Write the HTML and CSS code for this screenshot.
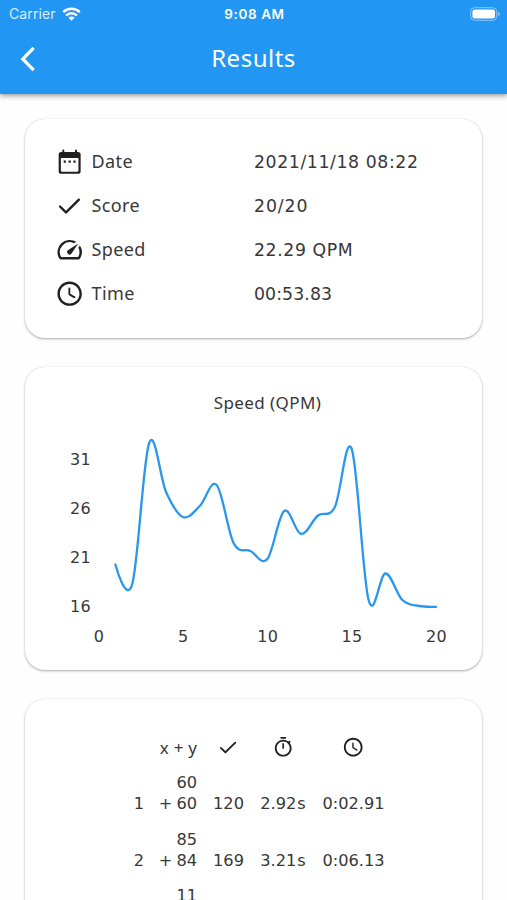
FILE: index.html
```html
<!DOCTYPE html>
<html lang="en">
<head>
<meta charset="utf-8">
<title>Results</title>
<link rel="stylesheet" href="styles.css">
</head>
<body>
<svg class="defs" width="0" height="0">
  <symbol id="check" viewBox="0 0 24 24"><path d="M9 16.2 4.8 12a1 1 0 0 0-1.4 1.4l4.9 4.9a1 1 0 0 0 1.4 0L20.3 7.7a1 1 0 0 0-1.4-1.4z"/></symbol>
  <symbol id="clock" viewBox="0 0 24 24"><path d="M11.99 2C6.47 2 2 6.48 2 12s4.47 10 9.99 10C17.52 22 22 17.52 22 12S17.52 2 11.99 2zM12 20c-4.42 0-8-3.58-8-8s3.58-8 8-8 8 3.58 8 8-3.58 8-8 8zm-.2-13a.8.8 0 0 0-.8.8v4.6c0 .35.2.65.5.83l4.1 2.47a.77.77 0 0 0 .8-1.3l-3.9-2.3V7.8a.75.75 0 0 0-.7-.8z"/></symbol>
</svg>
<header class="app-bar">
  <div class="status">
    <div class="status-left">
      <span>Carrier</span>
      <svg class="wifi" viewBox="0 0 19 14"><g fill="none" stroke="#fff" stroke-width="2.5"><path d="M1.2 5.1a12 12 0 0 1 16.6 0"/><path d="M4.1 8.5a7.5 7.5 0 0 1 10.8 0"/></g><path fill="#fff" d="M9.5 13.8 6.4 10.8a4.3 4.3 0 0 1 6.2 0z"/></svg>
    </div>
    <div class="clock">9:08 AM</div>
    <svg class="battery" viewBox="0 0 30 14"><rect x=".7" y=".7" width="26" height="12.6" rx="3.8" fill="none" stroke="#8bc7fa"/><rect x="2.4" y="2.4" width="22.6" height="9.2" rx="2.3" fill="#fff"/><path d="M28 4.7q1.8.7 1.8 2.3T28 9.3z" fill="#8bc7fa"/></svg>
  </div>
  <div class="nav">
    <svg class="back" viewBox="0 0 16 26"><path d="M13.7 1.9 2.7 13l11 11.1" fill="none" stroke="#fff" stroke-width="3.2"/></svg>
    <h1>Results</h1>
  </div>
</header>
<main>
  <section class="card summary">
    <div class="row">
      <svg class="icon" viewBox="0 0 24 24"><path d="M8 11.1h-.9v1.8h1.8v-1.8zm4 0h-.9v1.8h1.8v-1.8zm4 0h-.9v1.8h1.8v-1.8zM19 4h-1V2.8a.8.8 0 0 0-1.6 0V4H7.6V2.8a.8.8 0 0 0-1.6 0V4H5c-1.1 0-2 .9-2 2v14c0 1.1.9 2 2 2h14c1.1 0 2-.9 2-2V6c0-1.1-.9-2-2-2zm.2 15.3c0 .6-.3.9-.9.9H5.7c-.6 0-.9-.3-.9-.9V9h14.4z"/></svg>
      <span class="label">Date</span><span class="value">2021/11/18 08:22</span>
    </div>
    <div class="row"><svg class="icon"><use href="#check"/></svg><span class="label">Score</span><span class="value score">20/20</span></div>
    <div class="row">
      <svg class="icon" viewBox="0 0 24 24"><path d="M20.38 8.57l-1.23 1.85a8 8 0 0 1-.22 7.58H5.07A8 8 0 0 1 15.58 6.85l1.85-1.23A10 10 0 0 0 3.35 19a2 2 0 0 0 1.72 1h13.85a2 2 0 0 0 1.74-1 10 10 0 0 0-.27-10.44zm-9.79 6.84a2 2 0 0 0 2.83 0l5.66-8.49-8.49 5.66a2 2 0 0 0 0 2.83z"/></svg>
      <span class="label">Speed</span><span class="value">22.29 QPM</span>
    </div>
    <div class="row"><svg class="icon"><use href="#clock"/></svg><span class="label">Time</span><span class="value time">00:53.83</span></div>
  </section>
  <section class="card chart">
    <h2>Speed (QPM)</h2>
    <svg class="plot" viewBox="0 0 457 240" width="457" height="240">
      <g class="axis" text-anchor="middle">
        <text x="55.5" y="38">31</text><text x="55.5" y="87">26</text><text x="55.5" y="136">21</text><text x="55.5" y="185">16</text>
        <text x="74" y="215">0</text><text x="158.3" y="215">5</text><text x="242.8" y="215">10</text><text x="327" y="215">15</text><text x="411.5" y="215">20</text>
      </g>
      <path id="line" class="line"/>
    </svg>
  </section>
  <section class="card table-card">
    <table>
      <tr class="head"><th></th><th class="expr">x + y</th><th><svg class="small"><use href="#check"/></svg></th><th><svg class="small" viewBox="0 0 24 24"><path d="M14.2 1H9.8a.9.9 0 0 0 0 1.9h4.4a.9.9 0 0 0 0-1.9zM12 7.6c-.6 0-.9.4-.9.9v4.4a.9.9 0 0 0 1.8 0V8.5c0-.5-.4-.9-.9-.9zM19.03 7.39l.5-.5a.9.9 0 0 0-1.4-1.4l-.5.5A8.96 8.96 0 0 0 12 4c-4.97 0-9 4.03-9 9s4.02 9 9 9 9-4.03 9-9c0-2.12-.74-4.07-1.97-5.61zM12 20c-3.87 0-7-3.13-7-7s3.13-7 7-7 7 3.13 7 7-3.13 7-7 7z"/></svg></th><th><svg class="small"><use href="#clock"/></svg></th></tr>
      <tr><td>1</td><td class="expr">60<br>+ 60</td><td>120</td><td>2.92<span class="unit">s</span></td><td>0:02.91</td></tr>
      <tr><td>2</td><td class="expr">85<br>+ 84</td><td>169</td><td>3.21<span class="unit">s</span></td><td>0:06.13</td></tr>
      <tr><td></td><td class="expr">11</td><td></td><td></td><td></td></tr>
    </table>
  </section>
</main>
<script src="chart.js"></script>
</body>
</html>
```
FILE: styles.css
```css
* { box-sizing: border-box; }
body {
  margin: 0;
  height: 900px;
  overflow: hidden;
  background: #fefefe;
  color: #383838;
  font-family: "Noto Sans", sans-serif;
}
.defs { position: absolute; }
.app-bar {
  height: 94px;
  background: #2196f3;
  color: #fff;
  box-shadow: 0 2px 5px rgba(0, 0, 0, .38);
}
.status {
  height: 28px;
  display: grid;
  grid-template-columns: 1fr auto 1fr;
  align-items: center;
  padding: 0 7px 0 9px;
  font: 14px/28px Inter, sans-serif;
}
.status-left { display: flex; align-items: center; gap: 6px; color: #d9eefe; letter-spacing: .1px; }
.wifi { width: 19px; height: 14px; }
.clock { font-weight: 600; font-size: 13.5px; letter-spacing: .6px; }
.battery { width: 30px; height: 14px; justify-self: end; }
.nav {
  height: 62px;
  display: grid;
  grid-template-columns: 40px 1fr 40px;
  align-items: center;
}
.back { width: 16px; height: 26px; margin-left: 20px; }
h1 { margin: -2px 0 0; text-align: center; font-size: 24px; font-weight: 400; line-height: 32px; letter-spacing: .5px; }
main { padding: 25px 25px 0; display: flex; flex-direction: column; gap: 29px; }
.card {
  background: #fff;
  border-radius: 20px;
  box-shadow: 0 1px 2.5px rgba(0, 0, 0, .33), 0 0 1px rgba(0, 0, 0, .12);
}
.summary { height: 219px; padding: 21px 29.5px; font-size: 18px; }
.row { display: grid; grid-template-columns: 37px 162.5px 1fr; align-items: center; height: 44px; }
.icon { width: 29.3px; height: 29.3px; fill: #202020; }
.label { letter-spacing: .4px; padding-bottom: 2px; }
.value { font-family: "DejaVu Sans", sans-serif; font-size: 17.3px; letter-spacing: .6px; white-space: nowrap; }
.score { letter-spacing: .9px; }
.time { letter-spacing: .1px; }
.chart { height: 303px; padding-top: 23px; }
h2 { margin: 0; padding-left: 28px; text-align: center; font-size: 17px; font-weight: 400; line-height: 26px; letter-spacing: .4px; }
.plot { display: block; margin-top: 12px; }
.axis { font-family: "DejaVu Sans", sans-serif; font-size: 16px; fill: #383838; letter-spacing: .4px; transform: translateY(-1px); }
.line { fill: none; stroke: #2a97ee; stroke-width: 2.3; stroke-linecap: round; }
.table-card { height: 302px; padding: 33px 0 0 101px; }
table {
  table-layout: fixed;
  width: 275px;
  border-collapse: collapse;
  font-family: "DejaVu Sans", sans-serif;
  font-size: 16.2px;
  line-height: 21px;
}
th, td { padding: 0; font-weight: 400; text-align: center; vertical-align: top; height: 56.3px; white-space: nowrap; }
td { padding-top: 21px; }
td.expr { padding-top: 0; }
.head th { height: 40px; padding: 4px 0 14px; vertical-align: middle; }
.head th.expr { font-family: "Noto Sans", sans-serif; font-size: 17px; word-spacing: .5px; }
th:nth-child(1) { width: 26px; }
th:nth-child(2) { width: 45px; }
th:nth-child(3) { width: 63px; }
th:nth-child(4) { width: 46px; }
th:nth-child(5) { width: 95px; }
.expr { text-align: right; word-spacing: -1px; }
.unit { margin-left: 1px; }
.small { display: block; margin: auto; width: 22.4px; height: 22.4px; fill: #202020; }
```
FILE: chart.js
```js
// Smoothed speed line, one point per question.
const ys = [564.5, 584, 443, 492, 517, 506, 485, 543, 551, 559, 511, 534, 515.5, 507, 449, 600, 573.5, 600, 606, 606.8];
const pts = ys.map((y, i) => [90.4 + i * 16.88, y - 428]);
let t = [0, 0];
let d = `M${pts[0]}`;
for (let i = 1; i < pts.length; i++) {
  const prev = pts[i - 1], cur = pts[i], next = pts[i + 1] || cur;
  const c1 = [prev[0] + t[0], prev[1] + t[1]];
  t = [(next[0] - prev[0]) * 0.175, (next[1] - prev[1]) * 0.175];
  d += `C${c1} ${cur[0] - t[0]},${cur[1] - t[1]} ${cur}`;
}
document.getElementById('line').setAttribute('d', d);
```
